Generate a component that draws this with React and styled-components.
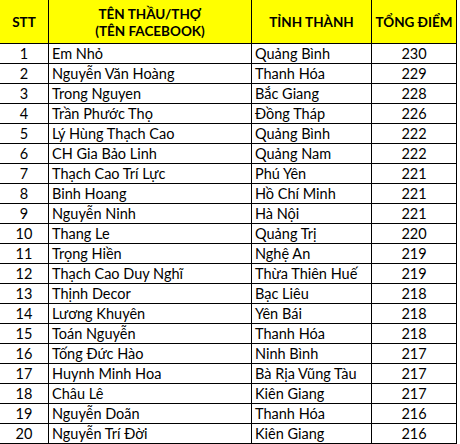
import React from 'react';
import styled, { createGlobalStyle } from 'styled-components';

const GlobalStyle = createGlobalStyle`
  html, body {
    margin: 0;
    padding: 0;
    background: #ffffff;
  }
  body {
    font-family: Lato, "Open Sans", sans-serif;
    color: #000000;
  }
`;

const Sheet = styled.div`
  display: grid;
  grid-template-columns: 49px 203px 120px 85px;
  grid-template-rows: 44px;
  grid-auto-rows: 20px;
  width: max-content;
`;

const HeadCell = styled.div`
  box-sizing: border-box;
  background: #ffff00;
  border-right: 1px solid #000;
  border-bottom: 1px solid #000;
  display: flex;
  align-items: center;
  justify-content: center;
  text-align: center;
  font-weight: 700;
  font-size: 13.5px;
  line-height: 17px;
  padding-top: 2px;
  white-space: nowrap;
`;

const Cell = styled.div`
  box-sizing: border-box;
  border-right: 1px solid #000;
  border-bottom: 1px solid #000;
  display: flex;
  align-items: center;
  justify-content: ${props => (props.center ? 'center' : 'flex-start')};
  padding-left: ${props => (props.center ? '0' : '3px')};
  font-size: 14.5px;
  white-space: nowrap;
  overflow: hidden;
`;

const rows = [
  ['Em Nhỏ', 'Quảng Bình', 230],
  ['Nguyễn Văn Hoàng', 'Thanh Hóa', 229],
  ['Trong Nguyen', 'Bắc Giang', 228],
  ['Trần Phước Thọ', 'Đồng Tháp', 226],
  ['Lý Hùng Thạch Cao', 'Quảng Bình', 222],
  ['CH Gia Bảo Linh', 'Quảng Nam', 222],
  ['Thạch Cao Trí Lực', 'Phú Yên', 221],
  ['Binh Hoang', 'Hồ Chí Minh', 221],
  ['Nguyễn Ninh', 'Hà Nội', 221],
  ['Thang Le', 'Quảng Trị', 220],
  ['Trọng Hiền', 'Nghệ An', 219],
  ['Thạch Cao Duy Nghĩ', 'Thừa Thiên Huế', 219],
  ['Thịnh Decor', 'Bạc Liêu', 218],
  ['Lương Khuyên', 'Yên Bái', 218],
  ['Toán Nguyễn', 'Thanh Hóa', 218],
  ['Tống Đức Hào', 'Ninh Bình', 217],
  ['Huynh Minh Hoa', 'Bà Rịa Vũng Tàu', 217],
  ['Châu Lê', 'Kiên Giang', 217],
  ['Nguyễn Doãn', 'Thanh Hóa', 216],
  ['Nguyễn Trí Đời', 'Kiên Giang', 216]
];

const App = () => {
  return (
    <>
      <GlobalStyle />
      <Sheet>
        <HeadCell>STT</HeadCell>
        <HeadCell>TÊN THẦU/THỢ<br />(TÊN FACEBOOK)</HeadCell>
        <HeadCell>TỈNH THÀNH</HeadCell>
        <HeadCell>TỔNG ĐIỂM</HeadCell>
        {rows.map(([name, province, score], i) => (
          <React.Fragment key={i}>
            <Cell center>{i + 1}</Cell>
            <Cell>{name}</Cell>
            <Cell>{province}</Cell>
            <Cell center>{score}</Cell>
          </React.Fragment>
        ))}
      </Sheet>
    </>
  );
};

export default App;
